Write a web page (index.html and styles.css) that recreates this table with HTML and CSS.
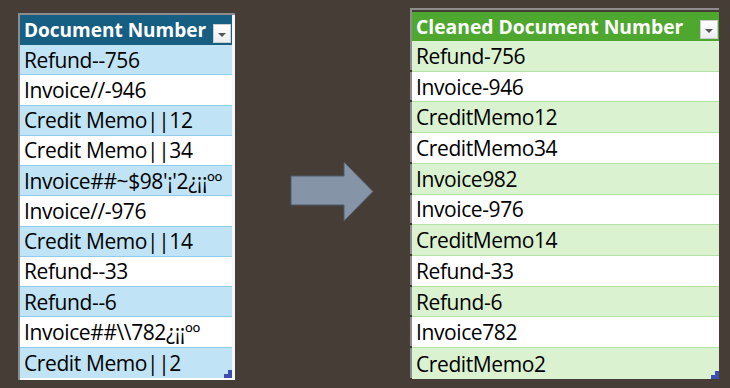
FILE: index.html
```html
<!DOCTYPE html>
<html lang="en">
<head>
<meta charset="utf-8">
<title>Document Number Cleanup</title>
<link rel="stylesheet" href="styles.css">
</head>
<body>
<div class="canvas">
  <div class="frame frame-left">
    <div class="tbl tbl-blue">
      <div class="hd"><span class="hd-text">Document Number</span><span class="dd"><span class="tri"></span></span></div>
      <div class="row band">Refund--756</div>
      <div class="row">Invoice//-946</div>
      <div class="row band">Credit Memo||12</div>
      <div class="row">Credit Memo||34</div>
      <div class="row band">Invoice##~$98'¡'2¿¡¡ºº</div>
      <div class="row">Invoice//-976</div>
      <div class="row band">Credit Memo||14</div>
      <div class="row">Refund--33</div>
      <div class="row band">Refund--6</div>
      <div class="row">Invoice##\\782¿¡¡ºº</div>
      <div class="row band last">Credit Memo||2<span class="grip"></span></div>
    </div>
  </div>

  <svg class="arrow" width="84" height="61" viewBox="0 0 84 61" aria-hidden="true">
    <polygon points="1,15 54,15 54,1 83,30.5 54,60 54,44 1,44" fill="#8694a7" stroke="#4d5b6c" stroke-width="1"/>
  </svg>

  <div class="frame frame-right">
    <div class="tbl tbl-green">
      <div class="hd"><span class="hd-text">Cleaned Document Number</span><span class="dd"><span class="tri"></span></span></div>
      <div class="row band">Refund-756</div>
      <div class="row">Invoice-946</div>
      <div class="row band">CreditMemo12</div>
      <div class="row">CreditMemo34</div>
      <div class="row band">Invoice982</div>
      <div class="row">Invoice-976</div>
      <div class="row band">CreditMemo14</div>
      <div class="row">Refund-33</div>
      <div class="row band">Refund-6</div>
      <div class="row">Invoice782</div>
      <div class="row band last">CreditMemo2<span class="grip"></span></div>
    </div>
  </div>
</div>
</body>
</html>
```

FILE: styles.css
```css
html, body {
  margin: 0;
  padding: 0;
}

body {
  width: 730px;
  height: 388px;
  overflow: hidden;
  background: #473d37;
  font-family: "Open Sans", "Noto Sans", sans-serif;
  color: #000;
}

.canvas {
  display: flex;
  align-items: flex-start;
  padding-left: 18px;
}

.frame {
  box-sizing: border-box;
  border-top: 2px solid #8d8d8d;
  border-left: 2px solid #8d8d8d;
}

.frame-left {
  width: 217px;
  margin-top: 13px;
}

.frame-right {
  width: 309px;
  margin-top: 8px;
  margin-left: 36px;
  padding-top: 2px;
}

.arrow {
  display: block;
  margin-left: 55px;
  margin-top: 161px;
}

.tbl {
  display: flex;
  flex-direction: column;
}

.hd {
  display: flex;
  justify-content: space-between;
  box-sizing: border-box;
  padding: 0 1px 0 4px;
  color: #fff;
  font-weight: 700;
  font-size: 19px;
  white-space: nowrap;
}

.hd-text {
  align-self: center;
}

.tbl-green .hd-text {
  font-size: 19.3px;
}

.dd {
  flex: none;
  align-self: flex-end;
  margin-bottom: 2px;
  width: 18px;
  height: 19px;
  box-sizing: border-box;
  background: linear-gradient(#ffffff, #eceef0);
  border: 1px solid #c9ccd0;
  display: flex;
  align-items: center;
  justify-content: center;
}

.tri {
  width: 0;
  height: 0;
  border-left: 4px solid transparent;
  border-right: 4px solid transparent;
  border-top: 4px solid #555;
  margin-top: 2px;
}

.row {
  position: relative;
  box-sizing: border-box;
  display: flex;
  align-items: center;
  padding-left: 4px;
  font-size: 21px;
  letter-spacing: -0.4px;
  white-space: nowrap;
  background: #fff;
  border-bottom: 1px solid;
}

.row::before {
  content: "";
  position: absolute;
  left: -2px;
  bottom: -1px;
  width: 2px;
  height: 2px;
  background: #3a3533;
}

.row.last {
  border-bottom: none;
}

.grip {
  position: absolute;
  right: 0;
  bottom: 0;
  width: 8px;
  height: 8px;
  background:
    linear-gradient(#3c4fb0, #3c4fb0) right top / 4px 4px no-repeat,
    linear-gradient(#3c4fb0, #3c4fb0) left bottom / 8px 4px no-repeat;
}

/* blue table */
.tbl-blue {
  border-right: 3px solid #f4f8fb;
  border-bottom: 2px solid #ffffff;
  overflow: hidden;
}

.tbl-blue .hd {
  height: 30px;
  background: #175f82;
}

.tbl-blue .row {
  height: 30.27px;
  border-bottom-color: #8fcbea;
}

.tbl-blue .row.band {
  background: #c0e4f5;
}

/* green table */
.tbl-green .hd {
  height: 29px;
  background: #4ea72e;
}

.tbl-green .row {
  height: 30.72px;
  border-bottom-color: #b4e2a0;
}

.tbl-green .row.band {
  background: #daf2d0;
}
```
